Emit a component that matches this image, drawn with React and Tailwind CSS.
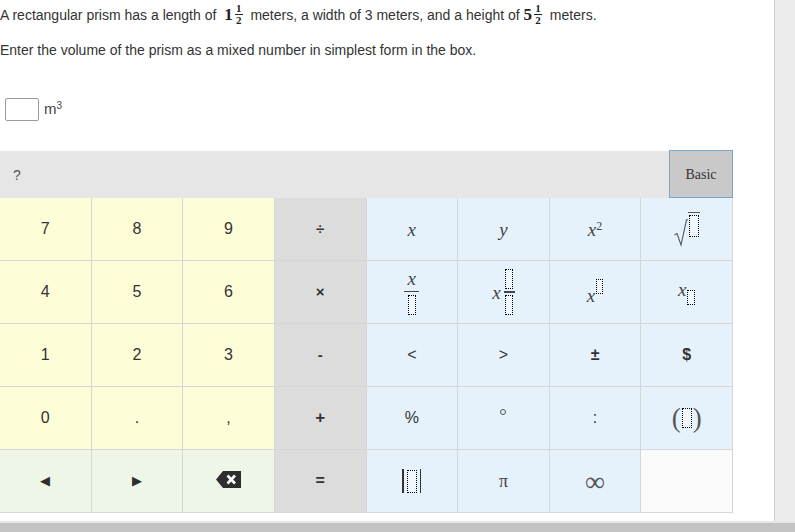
import React from 'react';

const SANS = { fontFamily: '"Liberation Sans", Arial, sans-serif' };

const Box = ({ className = 'w-[8px] h-[15px]' }) => (
  <span className={`inline-block border border-dotted border-black bg-white/40 ${className}`} />
);

const MixedNum = ({ whole }) => (
  <span className="inline-flex items-center font-['Liberation_Serif',serif] font-bold text-[#222] align-middle">
    <span className="text-[17px] leading-none">{whole}</span>
    <span className="ml-[2px] inline-flex flex-col items-center text-[11px] leading-[11px]">
      <span>1</span>
      <span className="w-[8px] h-px bg-[#222]" />
      <span>2</span>
    </span>
  </span>
);

const MathX = ({ children = 'x', className = '' }) => (
  <span className={`font-['Liberation_Serif',serif] italic text-[19px] leading-none text-[#444] ${className}`}>
    {children}
  </span>
);

const Backspace = () => (
  <svg width="25" height="17" viewBox="0 0 25 17">
    <path d="M7 0H25V17H7L0 8.5Z" fill="#2e2e2e" />
    <path d="M11.5 4.5L19 12.5M19 4.5L11.5 12.5" stroke="#fff" strokeWidth="2.6" />
  </svg>
);

const Radical = () => (
  <span className="inline-flex items-end">
    <svg width="14" height="28" viewBox="0 0 14 28">
      <path d="M0.5 16L3 14.5L7 26L12.5 0.8H14" fill="none" stroke="#555" strokeWidth="1.1" />
    </svg>
    <span className="border-t border-[#555] pt-[2px] px-[1px] mb-[3px]">
      <Box className="w-[10px] h-[22px]" />
    </span>
  </span>
);

const yellow = 'bg-[#fdfdd8]';
const gray = 'bg-[#dcdcdc]';
const blue = 'bg-[#e6f2fb]';
const green = 'bg-[#eef6e8]';

const numCls = 'text-[16px] text-[#333]';
const opCls = 'text-[15px] font-bold text-[#333]';
const symCls = 'text-[16px] text-[#333]';

const cells = [
  [yellow, <span className={numCls}>7</span>],
  [yellow, <span className={numCls}>8</span>],
  [yellow, <span className={numCls}>9</span>],
  [gray, <span className={opCls}>÷</span>],
  [blue, <MathX>x</MathX>],
  [blue, <MathX>y</MathX>],
  [blue, <MathX>x<sup className="text-[12px] not-italic">2</sup></MathX>],
  [blue, <Radical />],

  [yellow, <span className={numCls}>4</span>],
  [yellow, <span className={numCls}>5</span>],
  [yellow, <span className={numCls}>6</span>],
  [gray, <span className={`${opCls} text-[13px]`}>×</span>],
  [blue, (
    <span className="inline-flex flex-col items-center">
      <MathX className="text-[17px] mb-[3px]">x</MathX>
      <span className="w-[15px] h-[1.5px] bg-[#444]" />
      <Box className="w-[8px] h-[20px] mt-[3px]" />
    </span>
  )],
  [blue, (
    <span className="inline-flex items-center gap-[3px]">
      <MathX className="text-[17px]">x</MathX>
      <span className="inline-flex flex-col items-center">
        <Box className="w-[8px] h-[20px] mb-[2px]" />
        <span className="w-[11px] h-[1.5px] bg-[#444]" />
        <Box className="w-[8px] h-[20px] mt-[2px]" />
      </span>
    </span>
  )],
  [blue, (
    <span className="inline-flex items-start">
      <MathX className="text-[17px] mt-[7px]">x</MathX>
      <Box className="w-[7px] h-[15px] ml-[1px]" />
    </span>
  )],
  [blue, (
    <span className="inline-flex items-end">
      <MathX className="text-[17px] mb-[6px]">x</MathX>
      <Box className="w-[8px] h-[15px] ml-[1px]" />
    </span>
  )],

  [yellow, <span className={numCls}>1</span>],
  [yellow, <span className={numCls}>2</span>],
  [yellow, <span className={numCls}>3</span>],
  [gray, <span className={opCls}>-</span>],
  [blue, <span className={symCls}>&lt;</span>],
  [blue, <span className={symCls}>&gt;</span>],
  [blue, <span className={`${symCls} font-bold`}>±</span>],
  [blue, <span className={`${symCls} font-bold`}>$</span>],

  [yellow, <span className={numCls}>0</span>],
  [yellow, <span className={numCls}>.</span>],
  [yellow, <span className={numCls}>,</span>],
  [gray, <span className={`${opCls} text-[17px]`}>+</span>],
  [blue, <span className={symCls}>%</span>],
  [blue, <span className="w-[6px] h-[6px] rounded-full border border-[#555] -mt-[12px]" />],
  [blue, <span className={symCls}>:</span>],
  [blue, (
    <span className="inline-flex items-center font-['Liberation_Serif',serif] text-[27px] leading-none text-[#555]">
      <span>(</span>
      <Box className="w-[10px] h-[20px] mx-[1px]" />
      <span>)</span>
    </span>
  )],

  [green, <span className="text-[13px] text-[#2e2e2e]">◀</span>],
  [green, <span className="text-[13px] text-[#2e2e2e]">▶</span>],
  [green, <span className="-mt-[4px]"><Backspace /></span>],
  [gray, <span className={`${opCls} text-[16px]`}>=</span>],
  [blue, (
    <span className="inline-flex items-center gap-[3px]">
      <span className="w-[1.5px] h-[24px] bg-[#333]" />
      <Box className="w-[10px] h-[23px]" />
      <span className="w-[1.5px] h-[24px] bg-[#333]" />
    </span>
  )],
  [blue, <span className="font-['Liberation_Serif',serif] text-[18px] text-[#444]">π</span>],
  [blue, <span className="font-['Liberation_Serif',serif] text-[28px] leading-none text-[#555] mt-[2px]">∞</span>],
  ['bg-[#fafafa]', null],
];

export default function App() {
  return (
    <div className="w-[795px] h-[532px] flex flex-col bg-white overflow-hidden" style={SANS}>
      <div className="flex flex-1 min-h-0">
        <div className="w-[775px] shrink-0 border-r border-[#d2d2d2] bg-white">
          <div className="text-[14px] text-[#333] leading-[20px]">
            <p className="pt-[3px] flex items-center whitespace-nowrap">
              <span>A rectangular prism has a length of&nbsp;&nbsp;</span>
              <MixedNum whole="1" />
              <span>&nbsp;&nbsp;meters, a width of 3 meters, and a height of&nbsp;</span>
              <MixedNum whole="5" />
              <span>&nbsp;&nbsp;meters.</span>
            </p>
            <p className="mt-[14px]">Enter the volume of the prism as a mixed number in simplest form in the box.</p>
          </div>

          <div className="mt-[38px] ml-[5px] flex items-center gap-[5px]">
            <div className="w-[34px] h-[23px] border border-[#9a9a9a] rounded-[2px] bg-white" />
            <span className="text-[15px] text-[#444]">
              m<sup className="text-[10px]">3</sup>
            </span>
          </div>

          <div className="mt-[30px] w-[733px]">
            <div className="h-[47px] bg-[#e6e6e6] flex items-center justify-between">
              <span className="ml-[13px] mt-[2px] text-[14px] text-[#555]">?</span>
              <button className="w-[64px] h-[48px] -mt-px bg-[#c9c9c9] border border-[#7aa6cc] font-['Liberation_Serif',serif] text-[14px] text-[#333]">
                Basic
              </button>
            </div>
            <div className="grid grid-cols-8">
              {cells.map(([bg, content], i) => (
                <div
                  key={i}
                  className={`h-[63px] flex items-center justify-center border-r border-b border-[#d6d6d6] ${bg}`}
                >
                  {content}
                </div>
              ))}
            </div>
          </div>
        </div>
        <div className="flex-1 bg-[#ebebeb]" />
      </div>
      <div className="h-[11px] border-t-2 border-[#e6e6e6] bg-[#c3c3c3]" />
    </div>
  );
}
